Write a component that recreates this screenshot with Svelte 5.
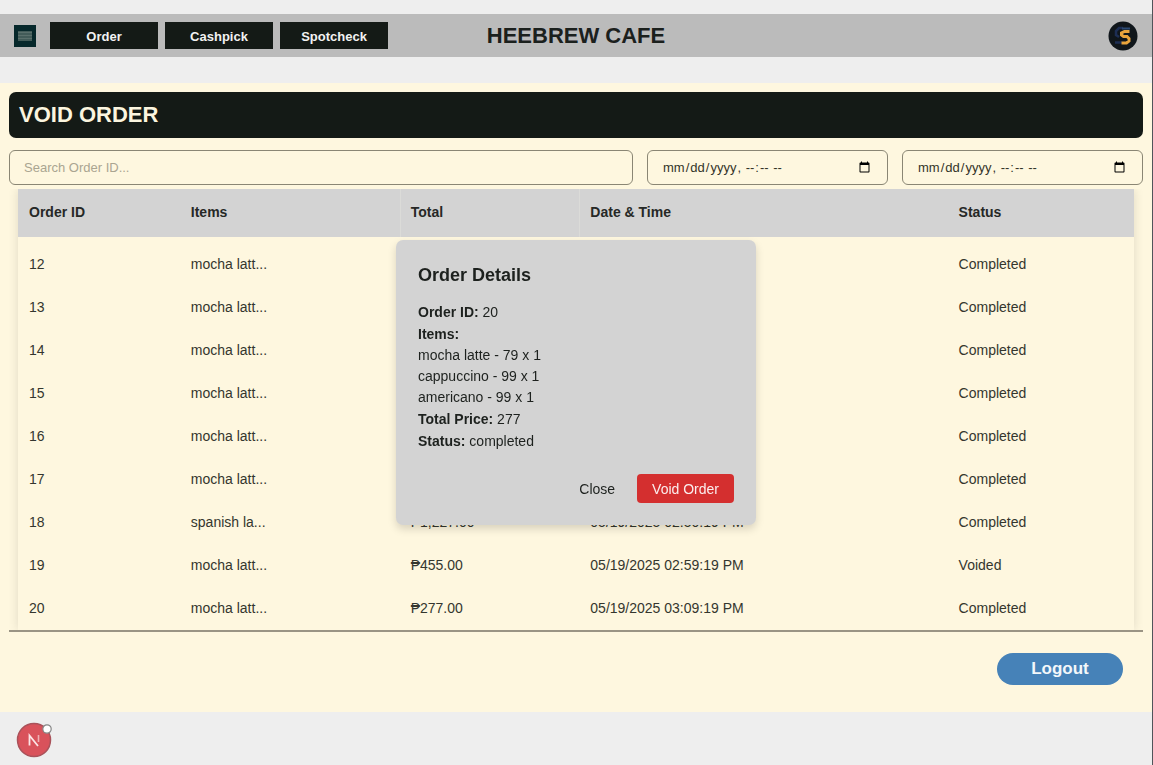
<script>
  const tabs = ['Order', 'Cashpick', 'Spotcheck'];
  const orders = [
    { id: 12, items: 'mocha latt...', status: 'Completed' },
    { id: 13, items: 'mocha latt...', status: 'Completed' },
    { id: 14, items: 'mocha latt...', status: 'Completed' },
    { id: 15, items: 'mocha latt...', status: 'Completed' },
    { id: 16, items: 'mocha latt...', status: 'Completed' },
    { id: 17, items: 'mocha latt...', status: 'Completed' },
    { id: 18, items: 'spanish la...', total: '₱1,227.00', date: '05/19/2025 02:50:19 PM', status: 'Completed' },
    { id: 19, items: 'mocha latt...', total: '₱455.00', date: '05/19/2025 02:59:19 PM', status: 'Voided' },
    { id: 20, items: 'mocha latt...', total: '₱277.00', date: '05/19/2025 03:09:19 PM', status: 'Completed' }
  ];
  const selected = {
    id: 20,
    lines: ['mocha latte - 79 x 1', 'cappuccino - 99 x 1', 'americano - 99 x 1'],
    total: 277,
    status: 'completed'
  };
  let open = $state(true);
</script>

<div class="page">
  <header>
    <nav>
      <button class="menu" aria-label="Menu">
        <svg viewBox="0 0 22 22" width="22" height="22">
          <rect width="22" height="22" fill="#06282b" />
          <rect x="4" y="6" width="14" height="10" fill="#435c59" />
          <path d="M4 7.5h14M4 10.5h14M4 13.5h14" stroke="#5a706c" stroke-width="1" />
        </svg>
      </button>
      {#each tabs as tab}
        <button class="tab">{tab}</button>
      {/each}
    </nav>
    <h1>HEEBREW CAFE</h1>
    <button class="avatar" aria-label="Account">
      <svg viewBox="0 0 30 30" width="30" height="30">
        <circle cx="15" cy="15" r="14.5" fill="#10161b" />
        <path d="M15 7h-4L8 10v4l3 2M7 21.5h7" fill="none" stroke="#1d2e54" stroke-width="2.5" />
        <path d="M14 7.5h8" fill="none" stroke="#2c4a74" stroke-width="2" />
        <path d="M21.5 10.5h-5L13.5 12v2l2 1.500h3.500l2 2v2.500L18.500 22h-5" fill="none" stroke="#e9a43c" stroke-width="3" />
      </svg>
    </button>
  </header>

  <main>
    <h2 class="banner">VOID ORDER</h2>
    <form class="filters">
      <input type="text" class="search" placeholder="Search Order ID..." aria-label="Search Order ID" />
      <input type="datetime-local" aria-label="From date" />
      <input type="datetime-local" aria-label="To date" />
    </form>

    <div class="scroller">
      <table>
        <colgroup>
          <col class="c-id" /><col class="c-items" /><col class="c-total" /><col class="c-date" /><col />
        </colgroup>
        <thead>
          <tr><th>Order ID</th><th>Items</th><th>Total</th><th>Date &amp; Time</th><th>Status</th></tr>
        </thead>
        <tbody>
          {#each orders as o}
            <tr><td>{o.id}</td><td>{o.items}</td><td>{o.total ?? ''}</td><td>{o.date ?? ''}</td><td>{o.status}</td></tr>
          {/each}
        </tbody>
      </table>
    </div>

    <div class="actions"><button class="logout">Logout</button></div>
  </main>

  {#if open}
    <div class="modal" role="dialog" aria-labelledby="details-title">
      <h3 id="details-title">Order Details</h3>
      <p><strong>Order ID:</strong> {selected.id}</p>
      <p><strong>Items:</strong></p>
      <ul>
        {#each selected.lines as line}<li>{line}</li>{/each}
      </ul>
      <p><strong>Total Price:</strong> {selected.total}</p>
      <p><strong>Status:</strong> {selected.status}</p>
      <div class="buttons">
        <button class="close" onclick={() => (open = false)}>Close</button>
        <button class="void">Void Order</button>
      </div>
    </div>
  {/if}

  <button class="badge" aria-label="Developer tools">
    <svg viewBox="0 0 40 40" width="40" height="40">
      <circle cx="20" cy="22" r="16.5" fill="#d9525b" stroke="#a9525a" stroke-width="1.5" />
      <path d="M15.5 27.5V17.5L24 28" fill="none" stroke="#fbe4e5" stroke-width="1.8" />
      <path d="M24.5 17v7" stroke="#eeb0b4" stroke-width="1.6" />
      <circle cx="33" cy="11" r="4.2" fill="#fff" stroke="#858585" stroke-width="1.2" />
    </svg>
  </button>
</div>

<style>
  :global(body) {
    margin: 0;
    background: #eee;
  }
  .page {
    box-sizing: border-box;
    min-height: 100vh;
    padding-top: 14px;
    border-right: 1px solid #50545a;
    font-family: 'Liberation Sans', Arial, sans-serif;
    font-size: 14px;
    color: #1d211e;
  }
  h1, h2, h3, p, ul {
    margin: 0;
    padding: 0;
  }
  button {
    font: inherit;
    border: 0;
    padding: 0;
    background: none;
    color: inherit;
    cursor: pointer;
  }
  svg {
    display: block;
  }
  header {
    display: grid;
    grid-template-columns: 1fr auto 1fr;
    align-items: center;
    height: 43px;
    padding: 0 14px;
    background: #bbb;
  }
  nav {
    display: flex;
    align-items: center;
    gap: 7px;
  }
  .menu {
    margin-right: 7px;
  }
  .tab {
    width: 108px;
    height: 27px;
    padding-top: 1px;
    background: #141a16;
    color: #f2f2f2;
    font-size: 13px;
    font-weight: bold;
  }
  h1 {
    font-size: 22px;
    line-height: 26px;
    color: #1b201d;
  }
  .avatar {
    justify-self: end;
  }
  main {
    margin-top: 26px;
    padding: 9px 9px 27px;
    background: #fef7df;
  }
  .banner {
    padding: 0 10px;
    border-radius: 7px;
    background: #141a16;
    color: #fbf5df;
    font-size: 22px;
    line-height: 46px;
  }
  .filters {
    display: grid;
    grid-template-columns: 1fr 241px 241px;
    gap: 14px;
    margin: 12px 0 4px;
  }
  .filters input {
    box-sizing: border-box;
    width: 100%;
    height: 35px;
    padding: 0 14px;
    border: 1px solid #8a8674;
    border-radius: 6px;
    background: transparent;
    color: #333428;
    font-family: inherit;
    font-size: 13px;
  }
  .search::placeholder {
    color: #aaa591;
  }
  .scroller {
    overflow: hidden;
    padding: 0 9px;
    border-bottom: 2px solid #9a9484;
  }
  table {
    width: 100%;
    table-layout: fixed;
    border-collapse: separate;
    border-spacing: 0;
    box-shadow: 0 0 10px rgba(0, 0, 0, 0.12);
  }
  .c-id { width: 14.5%; }
  .c-items { width: 19.7%; }
  .c-total { width: 16.1%; }
  .c-date { width: 33%; }
  th, td {
    box-sizing: border-box;
    height: 43px;
    padding: 0 11px 2px;
    text-align: left;
    color: #34362e;
  }
  th {
    height: 48px;
    background: #d3d3d3;
    color: #262826;
  }
  th:nth-child(3), th:nth-child(4) {
    border-left: 1px solid #dbdbd8;
    padding-left: 10px;
  }
  tbody tr:first-child td {
    height: 49px;
    padding-top: 6px;
  }
  .actions {
    display: flex;
    justify-content: flex-end;
    padding: 21px 20px 0;
  }
  .logout {
    width: 126px;
    height: 32px;
    border-radius: 16px;
    background: #4682b8;
    color: #f3f7fa;
    font-size: 17px;
    font-weight: bold;
  }
  .modal {
    position: fixed;
    inset: 0 1px 0 0;
    box-sizing: border-box;
    width: 360px;
    height: fit-content;
    margin: auto;
    padding: 22px;
    border-radius: 7px;
    background: #d3d3d3;
    box-shadow: 0 4px 9px rgba(0, 0, 0, 0.15);
  }
  h3 {
    margin-bottom: 13px;
    font-size: 18px;
    line-height: 26px;
  }
  .modal p {
    line-height: 22px;
  }
  ul {
    list-style: none;
    line-height: 21px;
  }
  .buttons {
    display: flex;
    justify-content: flex-end;
    gap: 22px;
    margin-top: 22px;
  }
  .void {
    height: 29px;
    padding: 0 15px;
    border-radius: 4px;
    background: #d42f2f;
    color: #fbeeee;
  }
  .badge {
    position: fixed;
    left: 14px;
    bottom: 7px;
  }
</style>
